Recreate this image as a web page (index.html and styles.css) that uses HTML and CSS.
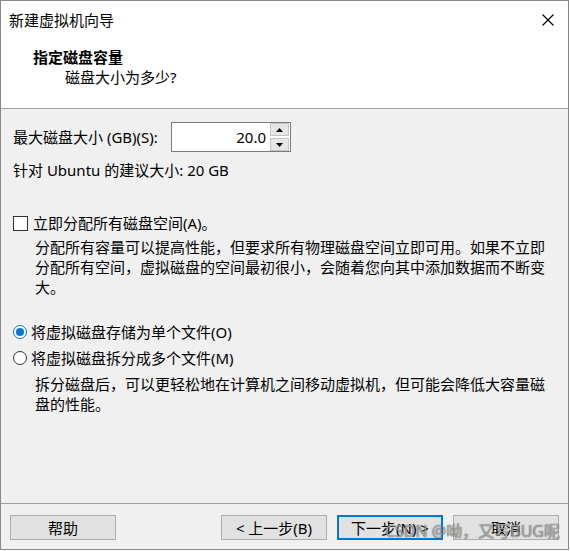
FILE: index.html
```html
<!DOCTYPE html>
<html lang="zh-CN">
<head>
    <meta charset="UTF-8">
    <title>新建虚拟机向导</title>
    <link rel="stylesheet" href="styles.css">
</head>
<body>
    <div class="window">
        <div class="titlebar">
            <span class="title">新建虚拟机向导</span>
            <span class="close">
                <svg width="12" height="12" viewBox="0 0 12 12"><path d="M0.5 0.5 L11.5 11.5 M11.5 0.5 L0.5 11.5" stroke="#000" stroke-width="1.1" fill="none"/></svg>
            </span>
        </div>
        <div class="header">
            <div class="heading">指定磁盘容量</div>
            <div class="subheading">磁盘大小为多少?</div>
        </div>
        <div class="content">
            <div class="size-row">
                <label for="size">最大磁盘大小 (GB)(S):</label>
                <div class="spin">
                    <input type="text" id="size" value="20.0">
                    <div class="spin-buttons">
                        <span class="spin-btn"><svg width="7" height="4" viewBox="0 0 7 4"><path d="M0 4 L3.5 0 L7 4 Z" fill="#000"/></svg></span>
                        <span class="spin-btn"><svg width="7" height="4" viewBox="0 0 7 4"><path d="M0 0 L7 0 L3.5 4 Z" fill="#000"/></svg></span>
                    </div>
                </div>
            </div>
            <div class="hint">针对 Ubuntu 的建议大小: 20 GB</div>

            <div class="option check-row">
                <span class="checkbox"></span>
                <span>立即分配所有磁盘空间(A)。</span>
            </div>
            <p class="desc">分配所有容量可以提高性能，但要求所有物理磁盘空间立即可用。如果不立即<br>分配所有空间，虚拟磁盘的空间最初很小，会随着您向其中添加数据而不断变<br>大。</p>

            <div class="option radio-row first">
                <span class="radio checked"></span>
                <span>将虚拟磁盘存储为单个文件(O)</span>
            </div>
            <div class="option radio-row">
                <span class="radio"></span>
                <span>将虚拟磁盘拆分成多个文件(M)</span>
            </div>
            <p class="desc split">拆分磁盘后，可以更轻松地在计算机之间移动虚拟机，但可能会降低大容量磁<br>盘的性能。</p>
        </div>
        <div class="footer">
            <button class="btn">帮助</button>
            <div class="nav">
                <button class="btn">&lt; 上一步(B)</button>
                <button class="btn default">下一步(N) &gt;</button>
                <button class="btn">取消</button>
            </div>
            <span class="watermark">CSDN @呦，又写BUG呢</span>
        </div>
    </div>
</body>
</html>
```

FILE: styles.css
```css
body {
    margin: 0;
    background-color: #fff;
    font-family: "Segoe UI", "Noto Sans", "Noto Sans CJK SC", sans-serif;
    font-size: 15px;
    color: #000;
}
.window {
    width: 567px;
    height: 548px;
    border: 1px solid #888;
    display: flex;
    flex-direction: column;
    background-color: #fff;
}
.titlebar {
    height: 37px;
    display: flex;
    align-items: center;
    justify-content: space-between;
    padding: 0 14px 0 8px;
    line-height: 20px;
}
.close {
    display: flex;
}
.header {
    height: 71px;
    padding: 9px 0 0 32px;
    box-sizing: border-box;
    border-bottom: 1px solid #a0a0a0;
    line-height: 20px;
}
.heading {
    font-weight: bold;
}
.subheading {
    padding-left: 32px;
}
.content {
    flex: 1;
    background-color: #f0f0f0;
    padding: 13px 12px 0 12px;
    line-height: 20px;
}
.size-row {
    display: flex;
    align-items: center;
    gap: 4px;
}
.size-row label {
    min-width: 154px;
}
.spin {
    display: flex;
    width: 118px;
    height: 28px;
    border: 1px solid #7a7a7a;
    background-color: #fff;
}
.spin input {
    flex: 1;
    width: 0;
    border: none;
    outline: none;
    font: inherit;
    text-align: right;
    padding: 0 3px 0 0;
    background: transparent;
}
.spin-buttons {
    display: flex;
    flex-direction: column;
    justify-content: center;
    gap: 2px;
    padding: 0 1px;
}
.spin-btn {
    width: 17px;
    height: 11px;
    background-color: #e5e5e5;
    border: 1px solid #c4c4c4;
    display: flex;
    align-items: center;
    justify-content: center;
}
.hint {
    margin-top: 8px;
}
.option {
    display: flex;
    align-items: center;
    gap: 5px;
}
.check-row {
    margin-top: 33px;
}
.checkbox {
    width: 13px;
    height: 13px;
    border: 1px solid #333;
    background-color: #fff;
}
.desc {
    margin: 4px 0 0 22px;
}
.desc.split {
    margin-top: 6px;
}
.radio-row {
    margin-top: 6px;
    gap: 4px;
}
.radio-row.first {
    margin-top: 25px;
}
.radio {
    width: 12px;
    height: 12px;
    border: 1px solid #333;
    border-radius: 50%;
    background-color: #fff;
    position: relative;
}
.radio.checked {
    border-color: #0078d7;
}
.radio.checked::after {
    content: "";
    position: absolute;
    left: 2px;
    top: 2px;
    width: 8px;
    height: 8px;
    border-radius: 50%;
    background-color: #0078d7;
}
.footer {
    height: 46px;
    border-top: 1px solid #a0a0a0;
    background-color: #f0f0f0;
    display: flex;
    justify-content: space-between;
    align-items: flex-start;
    padding: 11px 9px 0 9px;
    box-sizing: border-box;
    position: relative;
}
.nav {
    display: flex;
    gap: 10px;
}
.btn {
    width: 106px;
    height: 25px;
    background-color: #e1e1e1;
    border: 1px solid #adadad;
    font: inherit;
    color: #000;
    padding: 0;
    line-height: 20px;
}
.btn.default {
    border: 2px solid #0078d7;
}
.watermark {
    position: absolute;
    right: 8px;
    top: 17px;
    font-size: 16px;
    line-height: 20px;
    color: rgba(255, 255, 255, 0.55);
    text-shadow: 0 0 1px rgba(0, 0, 0, 0.55), 0 0 1px rgba(0, 0, 0, 0.55);
}
```
